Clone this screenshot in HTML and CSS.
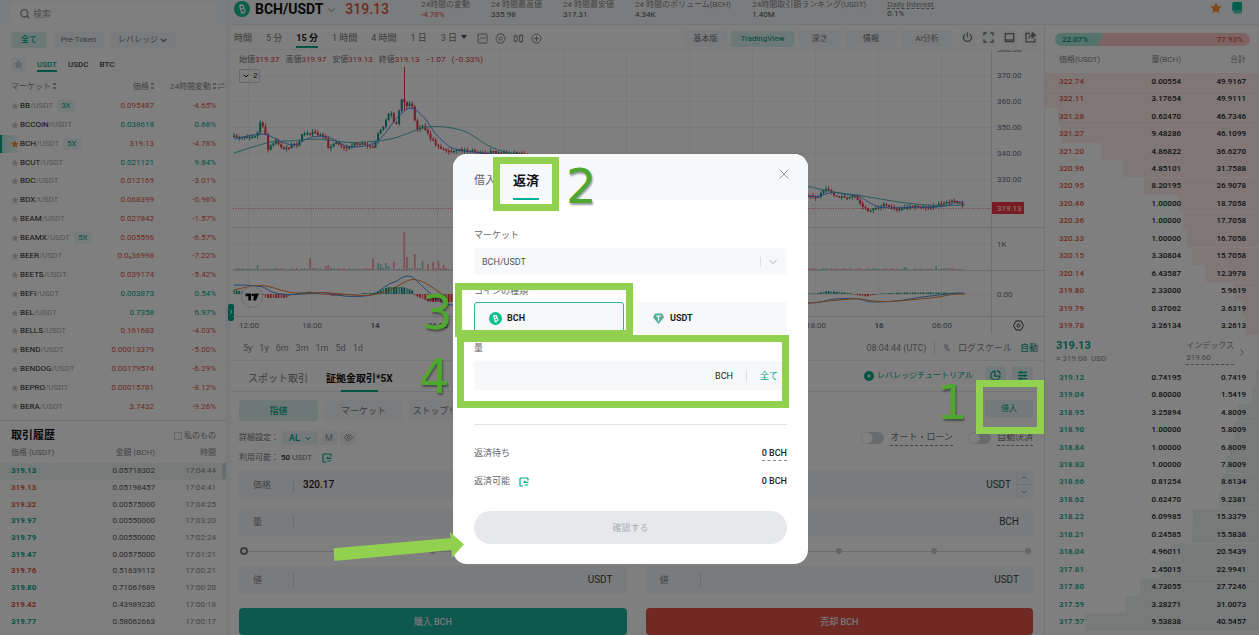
FILE: index.html
```html
<!DOCTYPE html>
<html lang="ja">
<head>
    <meta charset="UTF-8">
    <meta name="viewport" content="width=device-width, initial-scale=1.0">
    <title>BCH/USDT</title>
    <link rel="stylesheet" href="styles.css">
</head>
<body>
    <div class="page">
        <aside class="side">
            <div class="search_area">
                <label class="search">
                    <svg width="10" height="10" viewBox="0 0 10 10" fill="none" stroke="#888" stroke-width="1.2"><circle cx="4.3" cy="4.3" r="3.6"/><path d="M7 7l2.4 2.4"/></svg>
                    <input type="text" placeholder="検索" aria-label="検索">
                </label>
            </div>
            <div class="chips">
                <button class="chip on">全て</button>
                <button class="chip">Pre-Token</button>
                <span class="chip_select">
                    <select aria-label="レバレッジ"><option>レバレッジ</option></select>
                    <svg width="7" height="5" viewBox="0 0 7 5" fill="none" stroke="#777" stroke-width="1.3"><path d="M.8.8l2.7 2.8L6.2.8"/></svg>
                </span>
            </div>
            <nav class="quotes">
                <button class="fav" aria-label="お気に入り"><svg class="star" width="11" height="11" viewBox="0 0 12 12"><path d="M6 .6l1.7 3.5 3.8.5-2.8 2.7.7 3.8L6 9.3l-3.4 1.8.7-3.8L.5 4.6l3.8-.5z"/></svg></button>
                <a href="#" class="on">USDT</a>
                <a href="#">USDC</a>
                <a href="#">BTC</a>
            </nav>
            <table class="markets">
                <thead>
                    <tr><th>マーケット<i class="sort"></i></th><th>価格<i class="sort"></i></th><th>24時間変動<i class="sort"></i><span class="swap">⇌</span></th></tr>
                </thead>
                <tbody id="markets"></tbody>
            </table>
            <section class="history">
                <div class="history_head">
                    <h2>取引履歴</h2>
                    <label><input type="checkbox">私のもの</label>
                </div>
                <table class="trades">
                    <thead><tr><th>価格 (USDT)</th><th>金額 (BCH)</th><th>時間</th></tr></thead>
                    <tbody id="trades"></tbody>
                </table>
                <i class="scroll"></i>
            </section>
            <button class="handle" aria-label="閉じる"><svg width="4" height="6" viewBox="0 0 4 6" fill="none" stroke="#fff"><path d="M1 .8L3 3 1 5.2"/></svg></button>
        </aside>

        <div class="main">
            <header class="top">
                <svg class="coin" width="16" height="16" viewBox="0 0 16 16"><circle cx="8" cy="8" r="8" fill="#0ac18e"/><g transform="rotate(-15 8 8)" fill="none" stroke="#fff" stroke-width="1.3"><path d="M6 4.4h2.6a1.7 1.7 0 010 3.5H6.6h2.2a1.8 1.8 0 010 3.7H6M6.7 4.4v7.2M7.2 3v1.4M9 3v1.4M7.2 11.6V13M9 11.6V13"/></g></svg>
                <h1>BCH/USDT</h1>
                <svg class="pair_arrow" width="7" height="5" viewBox="0 0 7 5" fill="none" stroke="#777"><path d="M.6.8l2.9 2.8L6.4.8"/></svg>
                <strong class="last">319.13</strong>
                <dl class="stats">
                    <div><dt>24時間の変動</dt><dd class="down">-4.78%</dd></div>
                    <div><dt>24 時間最高値</dt><dd>335.98</dd></div>
                    <div><dt>24 時間最安値</dt><dd>317.31</dd></div>
                    <div><dt>24 時間のボリューム(BCH)</dt><dd>4.34K</dd></div>
                    <div><dt>24時間取引額ランキング(USDT)</dt><dd>1.40M</dd></div>
                    <div><dt class="dashed">Daily Interest</dt><dd>0.1%</dd></div>
                </dl>
                <div class="top_icons">
                    <svg width="12" height="12" viewBox="0 0 12 12" fill="#ff9226"><path d="M6 .4l1.7 3.5 3.9.5-2.8 2.8.7 3.9L6 9.3l-3.5 1.8.7-3.9L.4 4.4l3.9-.5z"/></svg>
                    <svg width="10" height="12" viewBox="0 0 10 12"><path d="M2 .5h7.5v8.8H2.2a.9.9 0 000 1.6h7.3" fill="none" stroke="#00b897"/><path d="M2 0h7v8.6H1.4A1.5 1.5 0 00.3 9V1.6A1.6 1.6 0 012 0z" fill="#00b897"/></svg>
                </div>
            </header>

            <div class="cols">
                <main class="center">
                    <div class="toolbar">
                        <nav class="times">
                            <button>時間</button><button>5 分</button><button class="on">15 分</button><button>1 時間</button><button>4 時間</button><button>1 日</button><button>3 日 <i class="caret"></i></button>
                        </nav>
                        <div class="tools">
                            <svg viewBox="0 0 11 11"><rect x="1" y="1" width="9" height="9" rx="1"/><path d="M2.5 6.5l2-2 1.5 1.5 2.5-2.5"/></svg>
                            <svg viewBox="0 0 11 11"><path d="M3.3 1h4.4L10.3 5.5 7.7 10H3.3L.7 5.5z"/><circle cx="5.5" cy="5.5" r="1.6"/></svg>
                            <svg viewBox="0 0 11 11"><rect x="1.2" y="3" width="3" height="5"/><rect x="6.6" y="2.5" width="3" height="6"/><path d="M2.7 1.5V3M2.7 8v1.5M8.1 1v1.5M8.1 8.5V10"/></svg>
                            <svg viewBox="0 0 11 11"><circle cx="5.5" cy="5.5" r="4.5"/><path d="M5.5 3v5M3 5.5h5"/></svg>
                        </div>
                        <div class="views">
                            <button>基本版</button><button class="on wide">TradingView</button><button>深さ</button><button class="mid">情報</button><button class="mid">AI分析</button>
                        </div>
                        <div class="view_icons">
                            <button aria-label="電源"><svg viewBox="0 0 11 11"><path d="M3.2 2.2a4 4 0 104.6 0M5.5.6v4.6"/></svg></button>
                            <button aria-label="全画面"><svg viewBox="0 0 11 11"><path d="M1 3.7V1h2.7M7.3 1H10v2.7M10 7.3V10H7.3M3.7 10H1V7.3"/></svg></button>
                            <button aria-label="表示"><svg viewBox="0 0 11 11"><rect x="1.3" y="1.6" width="8.4" height="8"/><path d="M1.3 8h8.4"/></svg></button>
                            <button aria-label="共有"><svg viewBox="0 0 11 11"><path d="M5 1.5H1v8.3h8.8V6.6M4 6.5C4.3 4.3 5.8 3.2 8 3.2"/><path d="M7.3.8l3 2.4-3 2.4z" fill="#777"/></svg></button>
                        </div>
                    </div>

                    <div class="chart_box">
                        <svg class="chart" id="chart" viewBox="233 50 811 283" preserveAspectRatio="xMinYMin meet"></svg>
                        <div class="legend">
                            <span>始値<b>319.37</b></span><span>高値<b>319.97</b></span><span>安値<b>319.13</b></span><span>終値<b>319.13</b></span><b>−1.07</b><b>(−0.33%)</b>
                        </div>
                        <button class="indicator"><svg width="6" height="4" viewBox="0 0 6 4" fill="none" stroke="#222"><path d="M.6.6L3 3 5.4.6"/></svg>2</button>
                    </div>

                    <div class="range_bar">
                        <div class="ranges"><button>5y</button><button>1y</button><button>6m</button><button>3m</button><button>1m</button><button>5d</button><button>1d</button></div>
                        <div class="scale"><span>08:04:44 (UTC)</span><i></i><button>%</button><button>ログスケール</button><button class="on">自動</button></div>
                    </div>

                    <div class="order_tabs">
                        <a href="#">スポット取引</a>
                        <a href="#" class="on">証拠金取引*5X</a>
                        <a href="#" class="tutorial"><svg width="10" height="10" viewBox="0 0 10 10"><circle cx="5" cy="5" r="5" fill="#00a88c"/><path d="M4 3l3 2-3 2z" fill="#fff"/></svg>レバレッジチュートリアル</a>
                        <button class="square" aria-label="時計"><svg viewBox="0 0 12 12"><path d="M5.3 1.2a5 5 0 105.5 5.5H5.3z"/><path d="M7.5.8a4.4 4.4 0 013.7 3.8"/></svg></button>
                        <button class="square" aria-label="設定"><svg viewBox="0 0 12 12"><path d="M1 2.5h10M1 6h10M1 9.5h10M4 1v3M8 4.5v3M4 8v3"/></svg></button>
                    </div>

                    <form class="order">
                        <div class="types">
                            <button type="button" class="on">指値</button><button type="button">マーケット</button><button type="button">ストップリミット</button>
                            <button type="button" class="borrow">借入</button>
                        </div>
                        <div class="settings">
                            <span>詳細設定：</span>
                            <span class="al"><select aria-label="詳細設定"><option>AL</option></select><svg width="6" height="5" viewBox="0 0 6 5" fill="none" stroke="#00a88c"><path d="M.5 1L3 3.6 5.5 1"/></svg></span>
                            <button type="button" class="mini">M</button>
                            <button type="button" class="mini" aria-label="表示"><svg width="9" height="7" viewBox="0 0 9 7" fill="none" stroke="#888"><path d="M.5 3.5c2-3.7 6-3.7 8 0-2 3.7-6 3.7-8 0z"/><circle cx="4.5" cy="3.5" r="1.1"/></svg></button>
                            <label class="toggle first"><input type="checkbox"><span>オート・ローン</span></label>
                            <label class="toggle"><input type="checkbox"><span>自動決済</span></label>
                        </div>
                        <div class="avail">利用可能： <b>50</b> USDT
                            <svg class="transfer" width="10" height="10" viewBox="0 0 10 10"><path d="M9 3.5V1.6L8.4 1H1.6L1 1.6v6.8l.6.6H4M4.6 5.4h4.8M4.6 5.6L6.2 4M5.4 8h3.8"/></svg>
                        </div>
                        <div class="sides">
                            <div class="side_form">
                                <label class="field tall"><span>価格</span><input type="text" value="320.17"><em>USDT</em></label>
                                <label class="field"><span>量</span><input type="text"><em>BCH</em></label>
                                <div class="slider"><div class="dots"><i></i><i></i><i></i><i></i><i></i></div><input type="range" value="0" aria-label="購入割合"></div>
                                <label class="field"><span>値</span><input type="text"><em>USDT</em></label>
                                <button type="button" class="submit buy">購入 BCH</button>
                            </div>
                            <div class="side_form">
                                <label class="field tall step_field"><span>価格</span><input type="text" value="320.17"><em>USDT</em>
                                    <svg class="step" viewBox="0 0 17 29" fill="none" stroke="#999"><path d="M5.5 9L8 6.5 10.5 9M5.5 20.5L8 23l2.5-2.5"/><path d="M0 1v27M0 14.5h17" stroke="#dfe2e6"/></svg></label>
                                <label class="field"><span>量</span><input type="text"><em>BCH</em></label>
                                <div class="slider"><div class="dots"><i></i><i></i><i></i><i></i><i></i></div><input type="range" value="0" aria-label="売却割合"></div>
                                <label class="field"><span>値</span><input type="text"><em>USDT</em></label>
                                <button type="button" class="submit sell">売却 BCH</button>
                            </div>
                        </div>
                    </form>
                </main>

                <section class="book">
                    <div class="ratio"><span>22.07%</span><span>77.93%</span></div>
                    <table class="book_table">
                        <thead><tr><th>価格(USDT)</th><th>量(BCH)</th><th>合計</th></tr></thead>
                        <tbody id="asks" class="asks"></tbody>
                    </table>
                    <div class="mid_price">
                        <div><strong>319.13</strong><small>≈ 319.08&nbsp; USD</small></div>
                        <a href="#"><span>インデックス</span><span>319.60</span></a>
                        <svg width="4" height="7" viewBox="0 0 4 7" fill="none" stroke="#888"><path d="M.6.6l2.6 2.9L.6 6.4"/></svg>
                    </div>
                    <table class="book_table">
                        <tbody id="bids" class="bids"></tbody>
                    </table>
                </section>
            </div>
        </div>
    </div>

    <div class="backdrop">
        <div class="modal" role="dialog" aria-label="返済">
            <div class="modal_head">
                <button class="tab">借入</button>
                <button class="tab on">返済</button>
                <button class="close" aria-label="閉じる"><svg width="10" height="10" viewBox="0 0 10 10" fill="none" stroke="#8f9499"><path d="M.5.5l9 9M9.5.5l-9 9"/></svg></button>
            </div>
            <div class="modal_body">
                <label class="cap" for="market">マーケット</label>
                <div class="modal_select">
                    <select id="market"><option>BCH/USDT</option></select>
                    <svg width="8" height="6" viewBox="0 0 8 6" fill="none" stroke="#aab"><path d="M.5 1L4 4.6 7.5 1"/></svg>
                </div>
                <span class="cap">コインの種類</span>
                <div class="coins">
                    <button class="on"><svg width="13" height="13" viewBox="0 0 16 16"><circle cx="8" cy="8" r="8" fill="#0ac18e"/><g transform="rotate(-15 8 8)" fill="none" stroke="#fff" stroke-width="1.4"><path d="M6 4.6h2.6a1.6 1.6 0 010 3.3H6.6h2.2a1.7 1.7 0 010 3.5H6M6.7 4.6v6.8M7.5 3v1.6M7.5 11.4V13"/></g></svg>BCH</button>
                    <button><svg width="13" height="13" viewBox="0 0 13 13"><path d="M3 1.5h7L12 5.2 6.5 12 1 5.2z" fill="#53ae94"/><path d="M4 4h5M6.5 4v5" fill="none" stroke="#fff" stroke-width="1.2"/></svg>USDT</button>
                </div>
                <label class="cap amount_cap" for="amount">量</label>
                <div class="amount"><input type="text" id="amount"><span>BCH</span><button>全て</button></div>
                <div class="sum first"><span>返済待ち</span><b class="dashed">0 BCH</b></div>
                <div class="sum"><span>返済可能 <svg class="transfer" width="10" height="10" viewBox="0 0 10 10"><path d="M9 3.5V1.6L8.4 1H1.6L1 1.6v6.8l.6.6H4M4.6 5.4h4.8M4.6 5.6L6.2 4M5.4 8h3.8"/></svg></span><b>0 BCH</b></div>
                <button class="confirm" disabled>確認する</button>
            </div>
        </div>
    </div>

    <!-- 手順の番号と枠 -->
    <div class="guide">
        <i class="frame frame1"></i><i class="frame frame2"></i><i class="frame frame3"></i><i class="frame frame4"></i>
        <span class="num num1">1</span><span class="num num2">2</span><span class="num num3">3</span><span class="num num4">4</span>
        <svg class="arrow" width="132" height="28" viewBox="0 0 132 28"><path d="M.7 17.3L117.7 7l-1-6.3L131 13.3 119 26.7l-.7-7.7L1.3 30z" fill="#92d050"/></svg>
    </div>
    <script src="script.js"></script>
</body>
</html>
```
FILE: styles.css
```css
*{
    box-sizing: border-box;
}

body{
    margin: 0;
    height: 100vh;
    overflow: hidden;
    position: relative;
    font-family: Roboto, "Noto Sans CJK JP", sans-serif;
    font-size: 8px;
    line-height: 12px;
    color: #222;
    background: #f4f6f8;
}

button, input, select{
    font: inherit;
    color: inherit;
    border: 0;
    padding: 0;
    margin: 0;
    background: none;
    min-width: 0;
    outline: none;
}

select{
    appearance: none;
}

a{
    color: inherit;
    text-decoration: none;
}

h1, h2, dl, dd{
    margin: 0;
}

i, em{
    font-style: normal;
}

svg{
    flex: none;
}

table{
    width: 100%;
    border-collapse: collapse;
}

th{
    font-weight: 400;
    color: #888;
    white-space: nowrap;
}

td, th{
    padding: 0;
    text-align: right;
}

td:first-child, th:first-child{
    text-align: left;
}

.up{
    color: #00a88c;
}

.down{
    color: #e05545;
}

.page{
    display: flex;
    height: 100%;
}

/* left */
.side{
    position: relative;
    flex: none;
    width: 227px;
    height: 100%;
    background: #fff;
    border-right: 1px solid #eceef0;
}

.search_area{
    height: 25px;
    padding: 3px 10px 0 11px;
    background: #f6f8fa;
}

.search{
    display: flex;
    align-items: center;
    gap: 3px;
    height: 21px;
    padding-left: 9px;
    border-radius: 4px;
    background: #fff;
}

.search input{
    flex: 1;
    font-size: 9px;
}

.search input::placeholder{
    color: #999;
}

.chips{
    display: flex;
    gap: 6px;
    padding: 7px 11px 0;
}

.chip, .chip_select{
    width: 51px;
    height: 16px;
    border-radius: 3px;
    background: #f4f7fa;
    color: #777;
}

.chip.on{
    width: 36px;
    background: #d8f2ee;
    color: #00a88c;
    font-weight: 500;
}

.chip_select{
    display: flex;
    align-items: center;
    width: 66px;
    padding-left: 8px;
}

.chip_select select{
    width: 42px;
}

.quotes{
    display: flex;
    align-items: center;
    gap: 11px;
    padding: 9px 11px 0;
    font-weight: 500;
    color: #444;
}

.quotes a{
    height: 15px;
    line-height: 15px;
}

.quotes .on{
    color: #00a88c;
    border-bottom: 2px solid #00a88c;
}

.fav{
    width: 15px;
    height: 15px;
    background: #f4f7fa;
}

.star{
    fill: #c9cdd2;
    vertical-align: middle;
}

.star.on{
    fill: #ff8a1c;
}

.markets{
    height: 344px;
}

.markets th{
    height: 25px;
    padding-top: 4px;
}

.markets th:first-child, .markets td:first-child{
    padding-left: 11px;
}

.markets td:nth-child(2), .markets th:nth-child(2){
    width: 54px;
}

.markets td:nth-child(3), .markets th:nth-child(3){
    width: 72px;
    padding-right: 10px;
    position: relative;
}

.sort{
    display: inline-block;
    width: 3px;
    height: 6px;
    margin-left: 2px;
    border-top: 2px solid #aaa;
    border-bottom: 2px solid #aaa;
}

.swap{
    position: absolute;
    right: 1px;
}

.markets .star{
    width: 8px;
    height: 8px;
    margin-right: 1px;
}

.markets td small{
    font-size: 8px;
    color: #aaa;
}

.markets .lev{
    display: inline-block;
    padding: 0 4px;
    margin-left: 4px;
    border-radius: 2px;
    background: #edf7f6;
    color: #00a88c;
}

.markets .now td:first-child{
    background: linear-gradient(90deg, #b9e8e0, #fff 22px);
    box-shadow: inset 2px 0 #00a88c;
}

.history{
    position: relative;
    margin-top: 4px;
    border-top: 1px solid #dfe2e5;
}

.history_head{
    display: flex;
    justify-content: space-between;
    align-items: center;
    height: 25px;
    padding: 4px 10px 0 11px;
}

.history_head h2{
    font-size: 11px;
    line-height: 16px;
    color: #111;
}

.history_head label{
    display: flex;
    align-items: center;
    gap: 2px;
    color: #888;
}

.history_head input{
    appearance: none;
    width: 8px;
    height: 8px;
    border: 1px solid #ccc;
}

.trades{
    height: 184px;
}

.trades th{
    height: 17px;
    padding-bottom: 3px;
}

.trades td:first-child, .trades th:first-child{
    padding-left: 11px;
}

.trades td:first-child{
    font-weight: 700;
}

.trades td:nth-child(2), .trades th:nth-child(2){
    width: 74px;
    color: #555;
}

.trades td:nth-child(3), .trades th:nth-child(3){
    width: 71px;
    padding-right: 10px;
    color: #888;
}

.trades th:nth-child(2){
    color: #888;
}

.trades tbody tr:first-child{
    background: #edf6f5;
}

.scroll{
    position: absolute;
    top: 42px;
    right: 0;
    width: 4px;
    height: 16px;
    background: #d5d9dc;
}

.handle{
    position: absolute;
    top: 304px;
    left: 228px;
    width: 6px;
    height: 17px;
    border-radius: 2px;
    background: #00a88c;
    line-height: 8px;
}

/* header */
.main{
    flex: 1;
    min-width: 0;
    display: flex;
    flex-direction: column;
    margin-left: 4px;
}

.top{
    flex: none;
    display: flex;
    height: 25px;
    padding-left: 3px;
    background: #f6f8fa;
    border-bottom: 1px solid #e6e9ec;
}

.coin{
    margin-top: 1px;
}

.top h1{
    margin: 0 5px;
    font-size: 14px;
    line-height: 18px;
    color: #111;
}

.pair_arrow{
    margin: 8px 10px 0 0;
}

.last{
    font-size: 14px;
    line-height: 18px;
    font-weight: 500;
    color: #e05545;
}

.stats{
    display: flex;
    gap: 21px;
    margin-left: 32px;
    line-height: 10px;
    white-space: nowrap;
    color: #555;
}

.stats dt{
    color: #888;
}

.stats .dashed{
    height: 9px;
    border-bottom: 1px dashed #888;
}

.top_icons{
    display: flex;
    gap: 10px;
    margin: 2px 17px 0 auto;
}

.cols{
    flex: 1;
    display: flex;
    min-height: 0;
}

.center{
    flex: 1;
    min-width: 0;
    background: #fff;
    border-right: 1px solid #e6e9ec;
}

/* chart */
.toolbar{
    display: flex;
    align-items: center;
    height: 25px;
    padding: 3px 6px 0 3px;
    border-bottom: 1px solid #f0f2f4;
    white-space: nowrap;
}

.times{
    display: flex;
    gap: 14px;
    font-size: 9px;
    color: #777;
}

.times button{
    height: 18px;
    line-height: 16px;
    border-bottom: 2px solid transparent;
}

.times .on{
    font-weight: 700;
    color: #111;
    border-color: #00a88c;
}

.caret{
    display: inline-block;
    margin: 0 0 2px 2px;
    border: 3px solid transparent;
    border-top: 4px solid #555;
    border-bottom: 0;
}

.tools{
    display: flex;
    gap: 7px;
    margin-left: 10px;
}

.tools svg, .view_icons svg{
    width: 11px;
    height: 11px;
    fill: none;
    stroke: #888;
}

.views{
    display: flex;
    gap: 4px;
    margin-left: auto;
    color: #777;
}

.views button, .view_icons button{
    width: 43px;
    height: 16px;
    border-radius: 3px;
    background: #f5f8fa;
}

.views .wide{
    width: 63px;
}

.views .mid{
    width: 52px;
}

.views .on{
    background: #d8f2ee;
    color: #00927a;
}

.view_icons{
    display: flex;
    gap: 6px;
    margin-left: 7px;
}

.view_icons button{
    width: 15px;
    line-height: 8px;
}

.view_icons svg{
    stroke: #777;
    stroke-width: 1.3;
}

.chart_box{
    position: relative;
    height: 283px;
    padding-left: 2px;
}

.chart{
    display: block;
    width: 100%;
    height: 283px;
}

.chart text{
    font-size: 8px;
    fill: #6d707b;
}

.legend{
    position: absolute;
    top: 4px;
    left: 8px;
    display: flex;
    gap: 6px;
    color: #777;
}

.legend b{
    font-weight: 400;
    color: #e23b3b;
}

.indicator{
    position: absolute;
    top: 19px;
    left: 8px;
    display: flex;
    align-items: center;
    gap: 4px;
    width: 21px;
    height: 14px;
    padding-left: 3px;
    border: 1px solid #cfd2d6;
    border-radius: 2px;
}

.range_bar{
    display: flex;
    justify-content: space-between;
    align-items: center;
    height: 28px;
    padding: 2px 6px 0 12px;
    border-bottom: 1px solid #e8ebee;
    font-size: 9px;
    color: #888;
}

.ranges, .scale{
    display: flex;
    align-items: center;
    gap: 8px;
}

.ranges{
    gap: 7px;
}

.scale i{
    width: 1px;
    height: 14px;
    background: #e0e3e6;
}

.scale .on{
    color: #00a88c;
    font-weight: 500;
}

/* order form */
.order_tabs{
    display: flex;
    align-items: center;
    height: 31px;
    padding: 0 11px 0 17px;
    border-bottom: 1px solid #e6e9ec;
    font-size: 10px;
    line-height: 36px;
    color: #777;
}

.order_tabs > .on{
    position: relative;
    height: 31px;
    margin-left: 18px;
    font-weight: 700;
    color: #111;
}

.order_tabs > .on::after{
    content: "";
    position: absolute;
    left: 22%;
    right: 22%;
    bottom: 0;
    height: 2px;
    background: #00a88c;
}

.order_tabs > a:first-child{
    height: 31px;
}

.order_tabs .tutorial{
    display: flex;
    align-items: center;
    gap: 3px;
    margin-left: auto;
    margin-right: 6px;
    font-size: 8px;
    line-height: 12px;
    color: #00a88c;
}

.square{
    width: 21px;
    height: 21px;
    margin-left: 6px;
    border-radius: 3px;
    background: #e6f5f3;
    line-height: 8px;
}

.square svg{
    width: 11px;
    height: 11px;
    fill: none;
    stroke: #00a88c;
    stroke-width: 1.4;
}

.order{
    padding: 8px 11px 0 8px;
}

.types{
    display: flex;
    gap: 6px;
    height: 21px;
    font-size: 9px;
    color: #777;
}

.types button{
    width: 79px;
    border-radius: 3px;
    background: #f5f8fa;
    white-space: nowrap;
}

.types .on{
    background: #d8f2ee;
    color: #00a88c;
    font-weight: 500;
}

.types .borrow{
    width: 48px;
    height: 18px;
    margin-left: auto;
    font-size: 8px;
    background: #e6f5f3;
    color: #00a88c;
}

.settings{
    display: flex;
    align-items: center;
    gap: 3px;
    height: 14px;
    margin-top: 10px;
    color: #777;
}

.al{
    display: flex;
    align-items: center;
    width: 36px;
    height: 14px;
    padding-left: 7px;
    border-radius: 2px;
    background: #e9f5f4;
    color: #00a88c;
    font-size: 9px;
    font-weight: 500;
}

.al select{
    width: 16px;
}

.mini{
    width: 16px;
    height: 14px;
    border-radius: 2px;
    background: #f1f4f6;
    font-size: 9px;
    line-height: 8px;
    color: #999;
}

.toggle{
    display: flex;
    align-items: center;
    gap: 6px;
    margin-left: 12px;
    font-size: 9px;
}

.toggle.first{
    margin-left: auto;
}

.toggle input{
    appearance: none;
    width: 23px;
    height: 12px;
    border-radius: 6px;
    background: radial-gradient(circle at 6px 6px, #fff 5px, #d3d5d9 6px);
}

.toggle span{
    height: 15px;
    border-bottom: 1px dashed #888;
}

.avail{
    height: 12px;
    margin: 7px 0 6px;
    color: #777;
}

.avail b{
    font-weight: 500;
    color: #222;
}

.transfer{
    margin-left: 8px;
    fill: none;
    stroke: #00a88c;
    stroke-width: 1.2;
    vertical-align: middle;
}

.sides{
    display: grid;
    grid-template-columns: 1fr 1fr;
    gap: 19px;
}

.field{
    position: relative;
    display: flex;
    align-items: center;
    height: 28px;
    padding: 0 14px;
    border-radius: 3px;
    background: #f3f6f9;
    font-size: 9px;
    color: #888;
}

.field.tall{
    height: 29px;
    margin-bottom: 9px;
}

.field.step_field{
    padding-right: 22px;
}

.step{
    position: absolute;
    right: 0;
    top: 0;
    width: 17px;
    height: 29px;
}

.field input{
    flex: 1;
    height: 14px;
    padding-left: 9px;
    border-left: 1px solid #d5d8dc;
    font-size: 10px;
    font-weight: 500;
    color: #222;
}

.field span{
    flex: none;
    width: 40px;
}

.field em{
    font-size: 10px;
    color: #444;
}

.slider{
    position: relative;
    height: 30px;
    padding: 12px 2px;
}

.dots{
    display: flex;
    justify-content: space-between;
    align-items: center;
    height: 6px;
    background: linear-gradient(#d5d8dc, #d5d8dc) center / 100% 1px no-repeat;
}

.dots i{
    width: 6px;
    height: 6px;
    border-radius: 50%;
    background: #c9ccd0;
}

.slider input{
    position: absolute;
    left: 1px;
    top: 11px;
    width: calc(100% - 2px);
    height: 8px;
    appearance: none;
}

.slider input::-webkit-slider-thumb{
    appearance: none;
    width: 8px;
    height: 8px;
    border: 2px solid #777;
    border-radius: 50%;
    background: #fff;
}

.submit{
    width: 100%;
    height: 27px;
    margin-top: 14px;
    border-radius: 4px;
    color: #eee;
    font-size: 9px;
    font-weight: 500;
}

.buy{
    background: #1cb09c;
}

.sell{
    background: #e05446;
}

/* order book */
.book{
    flex: none;
    width: 214px;
    background: #fff;
}

.ratio{
    display: flex;
    justify-content: space-between;
    margin: 8px 9px 0 10px;
    height: 13px;
    padding: 0 7px;
    border-radius: 7px;
    background: linear-gradient(110deg, #a9e6db 24%, #fbc9c6 24%);
    color: #e05545;
    font-weight: 500;
    line-height: 13px;
}

.ratio span:first-child{
    color: #00967b;
}

.book_table{
    height: 262px;
}

.book_table:has(thead){
    height: 289px;
}

.book_table th{
    height: 27px;
}

.book_table td{
    font-weight: 500;
}

.book_table td:first-child, .book_table th:first-child{
    padding-left: 14px;
}

.book_table td:nth-child(2), .book_table th:nth-child(2){
    width: 60px;
}

.book_table td:nth-child(3), .book_table th:nth-child(3){
    width: 78px;
    padding-right: 13px;
}

.asks tr{
    background: linear-gradient(#fdeeec, #fdeeec) right / var(--depth) 100% no-repeat;
}

.bids tr{
    background: linear-gradient(#edf6f5, #edf6f5) right / var(--depth) 100% no-repeat;
}

.mid_price{
    display: flex;
    align-items: center;
    height: 34px;
    padding: 0 15px 0 11px;
    color: #888;
}

.mid_price strong{
    display: block;
    font-size: 11px;
    line-height: 14px;
    color: #00a88c;
}

.mid_price small{
    font-size: 8px;
}

.mid_price a{
    margin: 0 6px 0 auto;
    border-bottom: 1px dashed #999;
}

.mid_price a span{
    display: block;
}

/* modal */
.backdrop{
    position: absolute;
    inset: 0;
    display: flex;
    justify-content: center;
    align-items: flex-start;
    padding: 154px 0 0 2px;
    background: rgba(0, 0, 0, .5);
}

.modal{
    width: 355px;
    border-radius: 14px;
    background: #fff;
    overflow: hidden;
    font-size: 9px;
}

.modal_head{
    display: flex;
    height: 46px;
    padding: 0 19px 0 21px;
    background: #f7f8fa;
}

.tab{
    font-size: 11px;
    padding-top: 8px;
    color: #666;
}

.tab.on{
    margin-left: 17px;
    padding-top: 10px;
    font-size: 13px;
    font-weight: 700;
    color: #111;
    border-bottom: 2px solid #00b098;
}

.close{
    margin-left: auto;
    align-self: flex-start;
    margin-top: 15px;
}

.modal_body{
    padding: 29px 21px 20px;
}

.cap{
    display: block;
    color: #666;
}

.modal_select{
    display: flex;
    align-items: center;
    height: 27px;
    margin: 7px 0 10px;
    padding: 0 10px 0 8px;
    border-radius: 3px;
    background: #f6f8fa;
}

.modal_select select{
    flex: 1;
    color: #555;
}

.modal_select svg{
    width: 17px;
    padding-left: 8px;
    border-left: 1px solid #dcdfe3;
    height: 10px;
}

.coins{
    display: grid;
    grid-template-columns: 1fr 1fr;
    gap: 13px;
    margin-top: 5px;
}

.coins button{
    display: flex;
    align-items: center;
    gap: 5px;
    height: 32px;
    padding-left: 14px;
    border: 1px solid transparent;
    border-radius: 3px;
    background: #f6f8fa;
    font-weight: 700;
    color: #222;
}

.coins .on{
    border-color: #2db5a3;
}

.amount_cap{
    margin-top: 8px;
}

.amount{
    display: flex;
    align-items: center;
    height: 29px;
    margin-top: 7px;
    padding-right: 9px;
    border-radius: 3px;
    background: #f6f8fa;
}

.amount input{
    flex: 1;
    padding-left: 8px;
}

.amount button{
    margin-left: 13px;
    padding-left: 13px;
    border-left: 1px solid #dcdfe3;
    color: #00a88c;
}

.sum{
    display: flex;
    justify-content: space-between;
    height: 16px;
    margin-top: 13px;
    color: #666;
}

.sum.first{
    margin-top: 34px;
    padding-top: 22px;
    height: 38px;
    border-top: 1px solid #e0e2e5;
}

.sum b{
    height: 15px;
    font-weight: 500;
    color: #222;
}

.sum .dashed{
    height: 14px;
    border-bottom: 1px dashed #888;
}

.sum .transfer{
    margin-left: 7px;
}

.confirm{
    width: 100%;
    height: 33px;
    margin-top: 20px;
    border-radius: 17px;
    background: #e7e8ec;
    color: #aaadb3;
}

/* guide marks */
.guide{
    position: absolute;
    inset: 0;
    pointer-events: none;
}

.frame, .num, .arrow{
    position: absolute;
}

.frame{
    border: 7px solid #92d050;
}

.frame1{
    left: 976px;
    top: 380px;
    width: 68px;
    height: 54px;
}

.frame2{
    left: 493px;
    top: 157px;
    width: 66px;
    height: 54px;
}

.frame3{
    left: 455px;
    top: 283px;
    width: 178px;
    height: 54px;
}

.frame4{
    left: 457px;
    top: 335px;
    width: 332px;
    height: 73px;
}

.num{
    font-family: "DejaVu Sans", sans-serif;
    font-size: 48px;
    line-height: 48px;
    color: #4ea72e;
    text-shadow: 1px 2px 2px rgba(0, 0, 0, .4);
}

.num1{
    left: 937px;
    top: 378px;
}

.num2{
    left: 566px;
    top: 162px;
}

.num3{
    left: 422px;
    top: 288px;
}

.num4{
    left: 419px;
    top: 352px;
}

.arrow{
    left: 333px;
    top: 531px;
    overflow: visible;
}
```
FILE: script.js
```js
const markets = [
    ['BB', '0.095487', '-4.65%', '3X'],
    ['BCCOIN', '0.038618', '0.68%'],
    ['BCH', '319.13', '-4.78%', '5X'],
    ['BCUT', '0.021121', '9.84%'],
    ['BDC', '0.012169', '-3.01%'],
    ['BDX', '0.068399', '-0.96%'],
    ['BEAM', '0.027842', '-1.57%'],
    ['BEAMX', '0.005596', '-6.57%', '5X'],
    ['BEER', '0.0₅36998', '-7.22%'],
    ['BEETS', '0.039174', '-5.42%'],
    ['BEFI', '0.003873', '0.54%'],
    ['BEL', '0.7358', '6.97%'],
    ['BELLS', '0.161683', '-4.03%'],
    ['BEND', '0.00013379', '-5.00%'],
    ['BENDOG', '0.00179574', '-6.29%'],
    ['BEPRO', '0.00015781', '-8.12%'],
    ['BERA', '3.7432', '-9.26%']
];

const trades = [
    ['319.13', '0.05718302', '17:04:44', 'up'],
    ['319.13', '0.05198457', '17:04:41', 'down'],
    ['319.32', '0.00575000', '17:04:25', 'down'],
    ['319.97', '0.00550000', '17:03:20', 'up'],
    ['319.79', '0.00550000', '17:02:24', 'up'],
    ['319.47', '0.00575000', '17:01:21', 'up'],
    ['319.76', '0.51639112', '17:00:21', 'down'],
    ['319.80', '0.71067689', '17:00:20', 'up'],
    ['319.42', '0.43989230', '17:00:18', 'down'],
    ['319.77', '0.58062663', '17:00:17', 'up']
];

const asks = [
    ['322.74', '0.00554', '49.9167'], ['322.11', '3.17654', '49.9111'], ['321.28', '0.62470', '46.7346'],
    ['321.27', '9.48286', '46.1099'], ['321.20', '4.86822', '36.6270'], ['320.96', '4.85101', '31.7588'],
    ['320.95', '8.20195', '26.9078'], ['320.46', '1.00000', '18.7058'], ['320.36', '1.00000', '17.7058'],
    ['320.33', '1.00000', '16.7058'], ['320.15', '3.30804', '15.7058'], ['320.14', '6.43587', '12.3978'],
    ['319.80', '2.33000', '5.9619'], ['319.79', '0.37062', '3.6319'], ['319.78', '3.26134', '3.2613']
];

const bids = [
    ['319.12', '0.74195', '0.7419'], ['319.04', '0.80000', '1.5419'], ['318.95', '3.25894', '4.8009'],
    ['318.90', '1.00000', '5.8009'], ['318.84', '1.00000', '6.8009'], ['318.83', '1.00000', '7.8009'],
    ['318.66', '0.81254', '8.6134'], ['318.62', '0.62470', '9.2381'], ['318.22', '6.09985', '15.3379'],
    ['318.21', '0.24585', '15.5838'], ['318.04', '4.96011', '20.5439'], ['317.81', '2.45015', '22.9941'],
    ['317.80', '4.73055', '27.7246'], ['317.59', '3.28271', '31.0073'], ['317.57', '9.53838', '40.5457']
];

const star = on => `<svg class="star ${on ? 'on' : ''}" viewBox="0 0 12 12"><path d="M6 .6l1.7 3.5 3.8.5-2.8 2.7.7 3.8L6 9.3l-3.4 1.8.7-3.8L.5 4.6l3.8-.5z"/></svg>`;

document.getElementById('markets').innerHTML = markets.map(([name, price, change, lev]) => {
    const color = change[0] === '-' ? 'down' : 'up';
    const now = name === 'BCH';
    return `<tr class="${now ? 'now' : ''}"><td>${star(now)}${name}<small>/USDT</small>${lev ? `<span class="lev">${lev}</span>` : ''}</td>
        <td class="${color}">${price}</td><td class="${color}">${change}</td></tr>`;
}).join('');

document.getElementById('trades').innerHTML = trades.map(([price, amount, time, color]) =>
    `<tr><td class="${color}">${price}</td><td>${amount}</td><td>${time}</td></tr>`).join('');

function renderBook(id, rows, color) {
    document.getElementById(id).innerHTML = rows.map(([price, amount, total]) =>
        `<tr style="--depth:${(total / 49.9 * 100).toFixed(1)}%"><td class="${color}">${price}</td><td>${amount}</td><td>${total}</td></tr>`).join('');
}
renderBook('asks', asks, 'down');
renderBook('bids', bids, 'up');

// chart
const RED = '#f23645';
const GREEN = '#089981';
let seed = 7;
const rnd = () => (seed = (seed * 16807) % 2147483647) / 2147483647;

// linear value between the [x, y] points
function at(points, x) {
    for (let i = 1; i < points.length; i++) {
        const [x0, y0] = points[i - 1], [x1, y1] = points[i];
        if (x <= x1) return y0 + (y1 - y0) * (x - x0) / (x1 - x0);
    }
    return points[points.length - 1][1];
}

const rect = (x, y, w, h, color, o = 1) => `<rect x="${x.toFixed(1)}" y="${y.toFixed(1)}" width="${w}" height="${h.toFixed(1)}" fill="${color}" opacity="${o}"/>`;
const seg = (x1, y1, x2, y2, color, more = '') => `<path d="M${x1} ${y1}L${x2} ${y2}" stroke="${color}" ${more}/>`;

// smooth line through the points
function curve(points, color) {
    let d = `M${points[0]}`;
    for (let i = 1; i < points.length - 1; i++) {
        const [x, y] = points[i], [nx, ny] = points[i + 1];
        d += `Q${x} ${y} ${(x + nx) / 2} ${(y + ny) / 2}`;
    }
    d += `L${points[points.length - 1]}`;
    return `<path d="${d}" fill="none" stroke="${color}"/>`;
}

const price = [[234, 137], [257, 135], [260, 122], [265, 131], [267, 152], [270, 147], [276, 141], [283, 149], [298, 144], [302, 135], [312, 133], [325, 137], [328, 148], [336, 141], [345, 149], [355, 143], [370, 145], [374, 148], [377, 137], [384, 125], [390, 111], [396, 127], [399, 112], [402, 96], [406, 109], [410, 102], [413, 106], [416, 131], [423, 124], [430, 138], [440, 148], [450, 152], [458, 150], [520, 154], [600, 180], [800, 195], [818, 197], [826, 188], [834, 195], [845, 198], [856, 195], [859, 203], [868, 211], [875, 208], [884, 205], [897, 209], [915, 206], [930, 208], [938, 204], [953, 201], [960, 203], [965, 208]];
const volume = { 257: 5, 259: 7, 267: 10, 301: 14, 309: 12, 325: 4, 328: 5, 372: 11, 378: 7, 380: 6, 385: 7, 388: 4, 393: 8, 398: 4, 404: 38, 406: 13, 414: 16, 422: 9, 427: 6, 433: 8, 438: 9, 443: 5, 877: 9, 880: 13, 919: 9, 935: 4, 937: 4, 904: 3 };
const hist = [[234, 4], [245, 2], [262, 0], [266, -4], [285, -4], [296, 1], [310, 2.5], [320, 0], [335, -2], [350, -1], [365, 1], [374, 1], [388, 7], [403, 7], [412, 4], [414, -1], [430, -8], [450, -8], [520, 0], [815, .5], [828, 3], [850, 1], [856, -1], [867, -2.5], [880, .5], [905, 1.5], [940, 1.5], [962, 1], [965, -1]];

let out = '';
for (let y = 75; y < 227; y += 26) out += seg(233, y + .5, 991, y + .5, '#f2f3f5');
for (let x = 249; x < 991; x += 63) out += seg(x - .5, 50, x - .5, 316, '#f2f3f5');
[244, 294].forEach(y => out += seg(233, y + .5, 991, y + .5, '#f2f3f5'));

let prev = 137;
for (let i = 0; i < 279; i++) {
    const x = 234 + i * 2.62;
    const y = at(price, x) + (rnd() - .5) * (x > 800 ? 1.5 : 3);
    const color = y > prev ? RED : GREEN;
    const top = Math.min(y, prev), h = Math.max(1.4, Math.abs(y - prev));
    const w1 = rnd() * 3, w2 = rnd() * 3;
    out += rect(x - .4, top - w1, .8, h + w1 + w2, color) + rect(x - 1, top, 2, h, color);
    // volume bars and MACD histogram share the same step
    const v = volume[Math.floor(x)] || volume[Math.floor(x) + 1] || .6 + rnd() * 1.6;
    out += rect(x - .9, 270 - v, 1.8, v, color, .45);
    const m = at(hist, x);
    out += rect(x - .9, m > 0 ? 294 - m : 294, 1.8, Math.max(.6, Math.abs(m)), m > 0 ? GREEN : RED, i % 3 ? 1 : .6);
    prev = y;
}
out += rect(404, 67, 1, 43, RED);

out += curve([[234, 139], [256, 134], [268, 134], [280, 142], [295, 146], [305, 139], [320, 135], [335, 139], [345, 147], [360, 147], [375, 144], [386, 133], [396, 118], [405, 110], [412, 107], [420, 113], [428, 122], [435, 134], [445, 143], [452, 149], [470, 152], [500, 154], [800, 196], [820, 197], [832, 191], [845, 195], [858, 195], [868, 202], [880, 208], [900, 208], [920, 207], [945, 207], [955, 202], [964, 202]], '#5b8def');
out += curve([[234, 153], [262, 144], [275, 141], [295, 141], [320, 138], [345, 143], [370, 142], [395, 139], [420, 128], [435, 126], [455, 128], [470, 133], [490, 148], [520, 156], [800, 184], [830, 192], [858, 195], [880, 199], [905, 203], [935, 206], [965, 205]], '#4fb7b5');
out += curve([[234, 285], [262, 285], [270, 292], [285, 295], [305, 294], [325, 292], [345, 297], [370, 296], [378, 292], [390, 283], [396, 282], [402, 277], [411, 275], [420, 284], [433, 296], [440, 302], [450, 306], [600, 312], [800, 303], [820, 303], [830, 299], [857, 298], [868, 302], [880, 302], [900, 301], [920, 297], [940, 295], [955, 293], [964, 293]], '#4a90e2');
out += curve([[234, 290], [250, 286], [265, 285], [280, 290], [298, 294], [325, 292], [350, 295], [370, 296], [385, 292], [398, 286], [408, 280], [416, 279], [428, 284], [440, 293], [453, 301], [600, 310], [800, 304], [830, 301], [858, 298], [870, 301], [890, 302], [920, 299], [940, 297], [953, 294], [965, 294]], '#e8833a');

out += seg(233, 208.5, 991, 208.5, RED, 'stroke-dasharray="1 1.5" opacity=".7"');
[227.5, 270.5, 316.5].forEach(y => out += seg(233, y, 1045, y, '#dcdee2'));
out += seg(991.5, 50, 991.5, 333, '#dcdee2');

['380.00', '370.00', '360.00', '350.00', '340.00', '330.00'].forEach((t, i) => out += `<text x="997" y="${52 + i * 26}">${t}</text>`);
out += `<text x="997" y="247">1K</text><text x="997" y="297">0.00</text>`;
['12:00', '18:00', '14', '06:00', '12:00', '18:00', '15', '06:00', '12:00', '18:00', '16', '06:00'].forEach((t, i) =>
    out += `<text x="${249 + i * 63}" y="328" text-anchor="middle" ${t.length === 2 ? 'font-weight="700"' : ''}>${t}</text>`);
out += `<rect x="992" y="202" width="32" height="12" fill="${RED}"/><text x="997" y="211" style="fill:#fff">319.13</text>`;
out += `<g fill="none" stroke="#333"><path d="M1016 321h5l2.5 4.5-2.5 4.5h-5l-2.5-4.5z"/><circle cx="1018.5" cy="325.5" r="1.5"/></g>`;
out += `<circle cx="252" cy="297" r="10.5" fill="#fff" stroke="#d8dade"/><path d="M245.5 293.5h5.5v7h-2.7v-4.2h-2.8zM254.5 293.5h4.5l-3 7h-3z" fill="#111"/><circle cx="252.8" cy="294.9" r="1.4" fill="#111"/>`;
document.getElementById('chart').innerHTML = out;
```
